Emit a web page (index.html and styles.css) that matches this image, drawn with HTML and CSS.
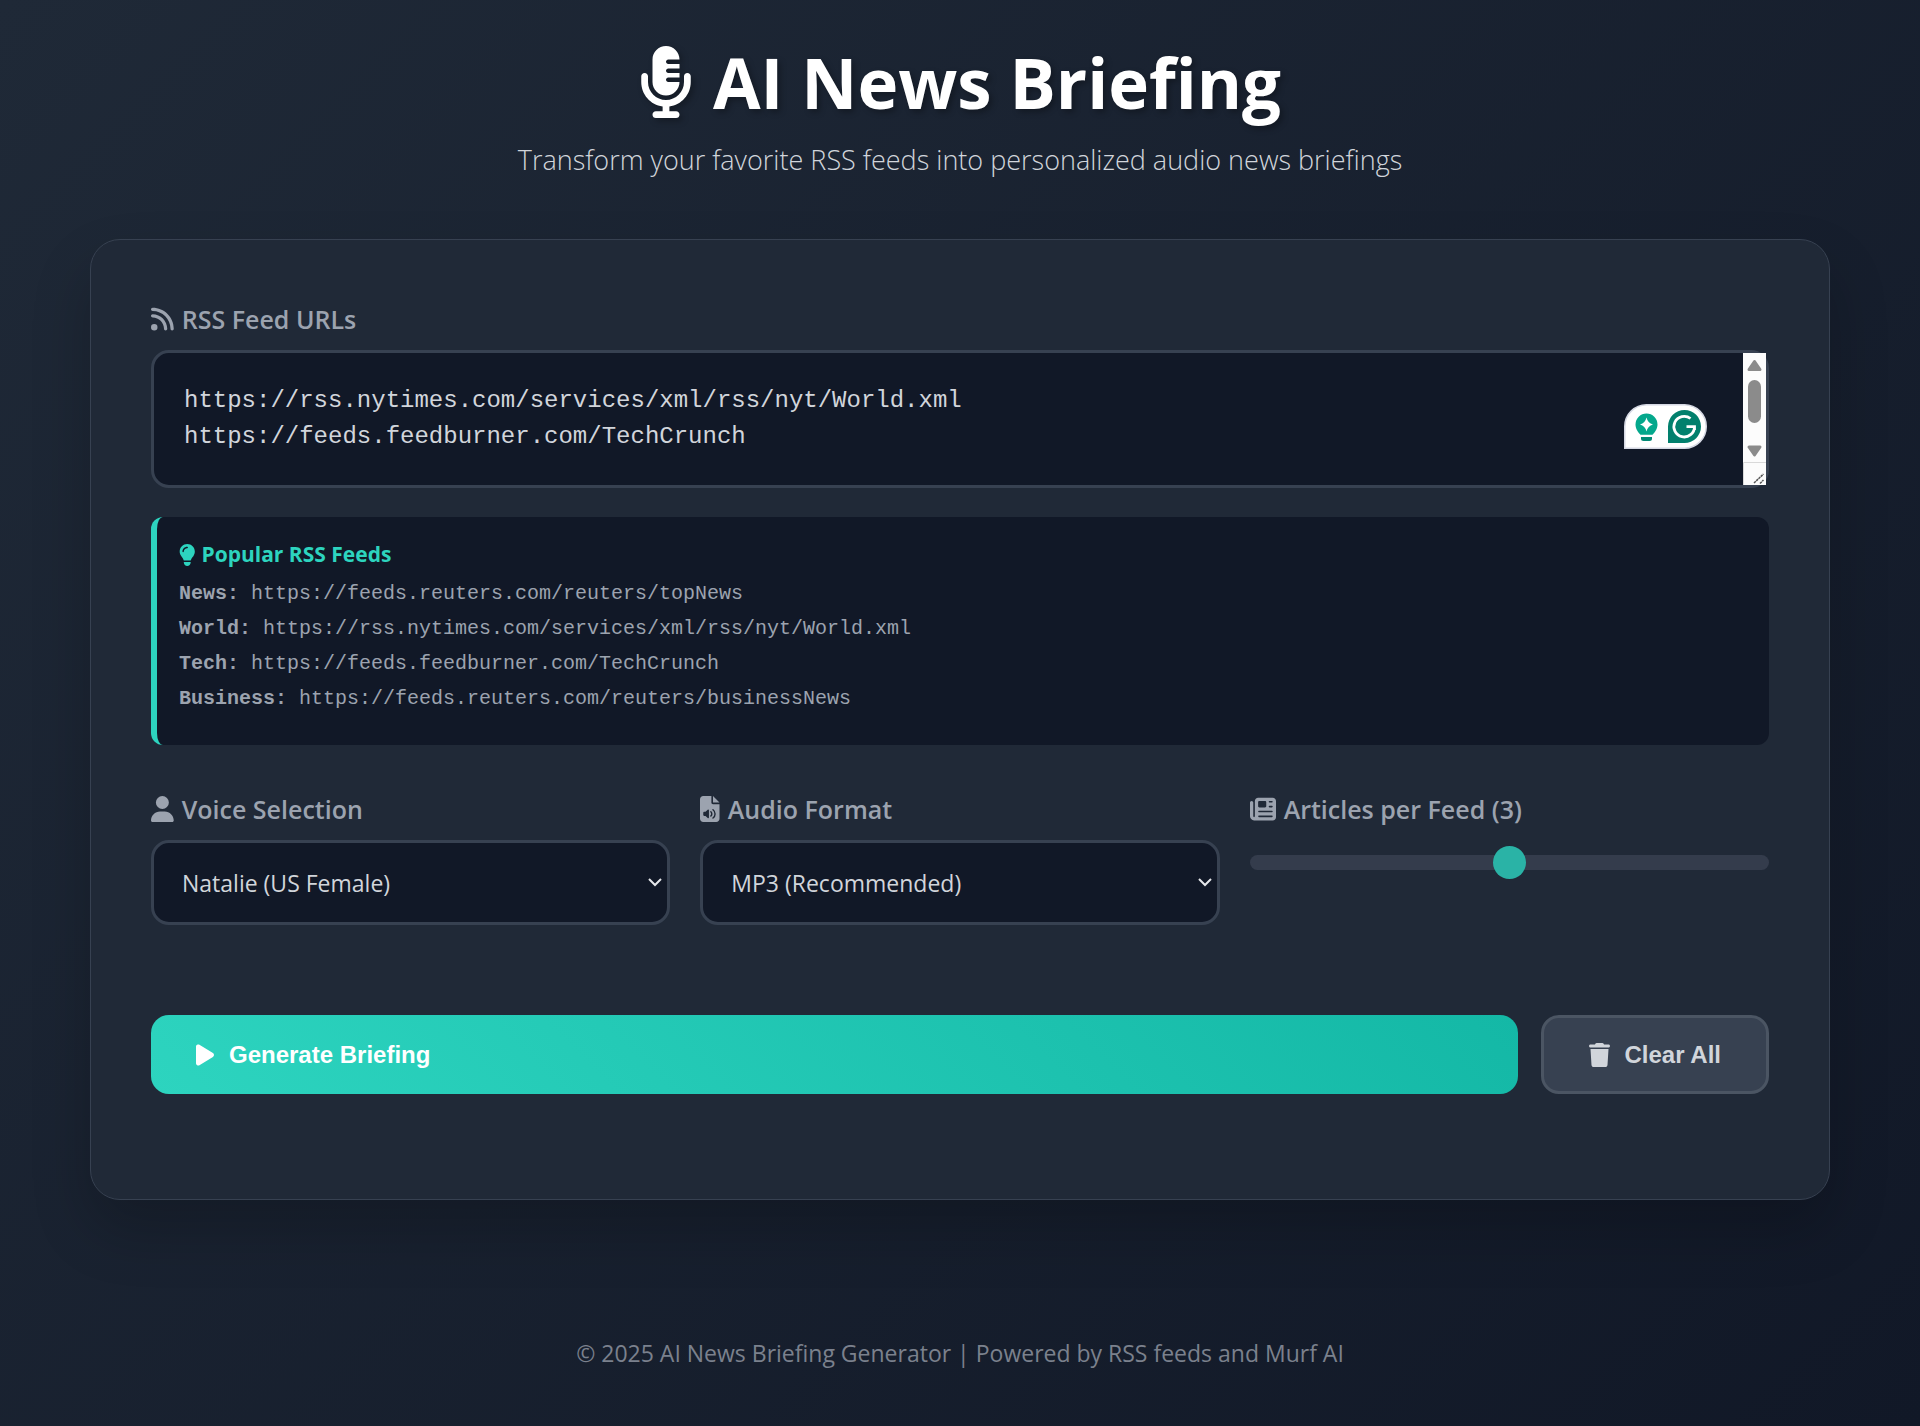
FILE: index.html
```html
<!DOCTYPE html>
<html lang="en">
<head>
<meta charset="utf-8">
<meta name="viewport" content="width=device-width, initial-scale=1">
<title>AI News Briefing</title>
<link rel="stylesheet" href="styles.css">
</head>
<body>
<div class="container">
  <header class="header">
    <h1 class="title">
      <svg class="title-icon" viewBox="0 0 384 512" aria-hidden="true"><path d="M96 96l0 160c0 53 43 96 96 96s96-43 96-96l-80 0c-8.8 0-16-7.2-16-16s7.2-16 16-16l80 0 0-32-80 0c-8.8 0-16-7.2-16-16s7.2-16 16-16l80 0 0-32-80 0c-8.8 0-16-7.2-16-16s7.2-16 16-16l80 0c0-53-43-96-96-96S96 43 96 96zM320 240l0 16c0 70.7-57.3 128-128 128s-128-57.3-128-128l0-40c0-13.3-10.7-24-24-24s-24 10.7-24 24l0 40c0 89.1 66.2 162.7 152 174.4l0 33.6-48 0c-13.3 0-24 10.7-24 24s10.7 24 24 24l144 0c13.3 0 24-10.7 24-24s-10.7-24-24-24l-48 0 0-33.6c85.8-11.7 152-85.3 152-174.4l0-40c0-13.3-10.7-24-24-24s-24 10.7-24 24l0 24z"/></svg>
      <span>AI News Briefing</span>
    </h1>
    <p class="subtitle">Transform your favorite RSS feeds into personalized audio news briefings</p>
  </header>

  <main class="card">
    <form class="form">
      <div class="field">
        <label class="label" for="feeds">
          <svg class="icon" viewBox="0 0 448 512" aria-hidden="true"><path d="M0 64C0 46.3 14.3 32 32 32c229.8 0 416 186.2 416 416c0 17.7-14.3 32-32 32s-32-14.3-32-32C384 253.6 226.4 96 32 96C14.3 96 0 81.7 0 64zM0 416a64 64 0 1 1 128 0A64 64 0 1 1 0 416zM32 160c159.1 0 288 128.9 288 288c0 17.7-14.3 32-32 32s-32-14.3-32-32c0-123.7-100.3-224-224-224c-17.7 0-32-14.3-32-32s14.3-32 32-32z"/></svg>
          RSS Feed URLs
        </label>
        <div class="feeds-box">
          <textarea class="feeds" id="feeds" rows="2" spellcheck="false">https://rss.nytimes.com/services/xml/rss/nyt/World.xml
https://feeds.feedburner.com/TechCrunch</textarea>
          <svg class="scrollbar" viewBox="0 0 23 132" aria-hidden="true">
            <rect width="23" height="132" fill="#fcfcfc"/>
            <path d="M11.5 8.5L17 16.5H6z" fill="#8b8b8b" stroke="#8b8b8b" stroke-width="3" stroke-linejoin="round"/>
            <rect x="5" y="27" width="13" height="43" rx="6.5" fill="#8b8b8b"/>
            <path d="M11.5 102L17 94H6z" fill="#8b8b8b" stroke="#8b8b8b" stroke-width="3" stroke-linejoin="round"/>
            <path d="M.5 132V109.5H23" fill="none" stroke="#d9d9d9"/>
            <path d="M11 130L20.5 121M17 130.5L20.5 127" fill="none" stroke="#555" stroke-width="1.5" stroke-dasharray="2.5 .6"/>
          </svg>
          <svg class="assistant" viewBox="0 0 83 45" aria-hidden="true">
            <path d="M.75 44.25V22.5A21.75 21.75 0 0 1 22.5 .75H60.5a21.75 21.75 0 0 1 0 43.5z" fill="#fff" stroke="#d5d8e3" stroke-width="1.5"/>
            <path d="M22.5 9.5a11 11 0 0 1 11 11c0 4.5-2.5 7.5-5 10.3H16.5c-2.5-2.8-5-5.8-5-10.3a11 11 0 0 1 11-11z" fill="#04a88c"/>
            <path d="M17 33h11v1.5a2.5 2.5 0 0 1-2.5 2.5h-6a2.5 2.5 0 0 1-2.5-2.5z" fill="#028a75"/>
            <path d="M22.5 13.5q1.3 5.7 6.5 7-5.2 1.3-6.5 7-1.3-5.7-6.5-7 5.2-1.3 6.5-7z" fill="#fff"/>
            <path d="M44 39V22.5A16.5 16.5 0 1 1 60.5 39z" fill="#02806d"/>
            <path d="M66.5 14.5A10.3 10.3 0 1 0 70.5 22.7H62.5M70.5 22.7V26" fill="none" stroke="#fff" stroke-width="2.8"/>
          </svg>
        </div>
      </div>

      <section class="popular">
        <h2 class="popular-title">
          <svg class="popular-icon" viewBox="0 0 384 512" aria-hidden="true"><path d="M272 384c9.6-31.9 29.5-59.1 49.2-86.2c5.2-7.1 10.4-14.2 15.4-21.4c19.8-28.5 31.4-63 31.4-100.3C368 78.8 289.2 0 192 0S16 78.8 16 176c0 37.3 11.6 71.9 31.4 100.3c5 7.2 10.2 14.3 15.4 21.4c19.8 27.1 39.7 54.4 49.2 86.2l160 0zM192 512c44.2 0 80-35.8 80-80l0-16-160 0 0 16c0 44.2 35.8 80 80 80zM112 176c0 8.8-7.2 16-16 16s-16-7.2-16-16c0-61.9 50.1-112 112-112c8.8 0 16 7.2 16 16s-7.2 16-16 16c-44.2 0-80 35.8-80 80z"/></svg>
          Popular RSS Feeds
        </h2>
        <ul class="popular-list">
          <li><strong>News:</strong> https://feeds.reuters.com/reuters/topNews</li>
          <li><strong>World:</strong> https://rss.nytimes.com/services/xml/rss/nyt/World.xml</li>
          <li><strong>Tech:</strong> https://feeds.feedburner.com/TechCrunch</li>
          <li><strong>Business:</strong> https://feeds.reuters.com/reuters/businessNews</li>
        </ul>
      </section>

      <div class="options">
        <div class="field">
          <label class="label" for="voice">
            <svg class="icon" viewBox="0 0 448 512" aria-hidden="true"><path d="M224 256A128 128 0 1 0 224 0a128 128 0 1 0 0 256zm-45.7 48C79.8 304 0 383.8 0 482.3C0 498.7 13.3 512 29.7 512l388.6 0c16.4 0 29.7-13.3 29.7-29.7C448 383.8 368.2 304 269.7 304l-91.4 0z"/></svg>
            Voice Selection
          </label>
          <div class="select-box">
            <select class="select" id="voice"><option>Natalie (US Female)</option></select>
            <svg class="chevron" viewBox="0 0 14 9" aria-hidden="true"><path d="M1 1l6 6 6-6"/></svg>
          </div>
        </div>
        <div class="field">
          <label class="label" for="format">
            <svg class="icon" viewBox="0 0 384 512" aria-hidden="true"><path d="M64 0C28.7 0 0 28.7 0 64L0 448c0 35.3 28.7 64 64 64l256 0c35.3 0 64-28.7 64-64l0-288-128 0c-17.7 0-32-14.3-32-32L224 0 64 0zM256 0l0 128 128 0L256 0z"/><path class="cutout" d="M80 312h28l44-40c10-9 24-4 24 10v140c0 14-14 19-24 10l-44-40H80c-9 0-16-7-16-16v-48c0-9 7-16 16-16z"/><path class="cutout-line" d="M214 312c24 22 24 58 0 80M256 272c54 44 54 116 0 160"/></svg>
            Audio Format
          </label>
          <div class="select-box">
            <select class="select" id="format"><option>MP3 (Recommended)</option></select>
            <svg class="chevron" viewBox="0 0 14 9" aria-hidden="true"><path d="M1 1l6 6 6-6"/></svg>
          </div>
        </div>
        <div class="field">
          <label class="label" for="articles">
            <svg class="icon" viewBox="0 0 512 512" aria-hidden="true"><path d="M96 96c0-35.3 28.7-64 64-64l288 0c35.3 0 64 28.7 64 64l0 320c0 35.3-28.7 64-64 64L80 480c-44.2 0-80-35.8-80-80L0 128c0-17.7 14.3-32 32-32s32 14.3 32 32l0 272c0 8.8 7.2 16 16 16s16-7.2 16-16L96 96zm64 24l0 80c0 13.3 10.7 24 24 24l112 0c13.3 0 24-10.7 24-24l0-80c0-13.3-10.7-24-24-24L184 96c-13.3 0-24 10.7-24 24zm208-8c0 8.8 7.2 16 16 16l48 0c8.8 0 16-7.2 16-16s-7.2-16-16-16l-48 0c-8.8 0-16 7.2-16 16zm0 96c0 8.8 7.2 16 16 16l48 0c8.8 0 16-7.2 16-16s-7.2-16-16-16l-48 0c-8.8 0-16 7.2-16 16zM160 304c0 8.8 7.2 16 16 16l256 0c8.8 0 16-7.2 16-16s-7.2-16-16-16l-256 0c-8.8 0-16 7.2-16 16zm0 96c0 8.8 7.2 16 16 16l256 0c8.8 0 16-7.2 16-16s-7.2-16-16-16l-256 0c-8.8 0-16 7.2-16 16z"/></svg>
            Articles per Feed (3)
          </label>
          <input class="range" id="articles" type="range" min="1" max="5" value="3">
        </div>
      </div>

      <div class="actions">
        <button class="button button-primary" type="button">
          <svg class="button-icon" viewBox="0 0 384 512" aria-hidden="true"><path d="M73 39c-14.8-9.1-33.4-9.4-48.5-.9S0 62.6 0 80L0 432c0 17.4 9.4 33.4 24.5 41.9s33.7 8.1 48.5-.9L361 297c14.3-8.7 23-24.2 23-41s-8.7-32.2-23-41L73 39z"/></svg>
          Generate Briefing
        </button>
        <button class="button button-secondary" type="button">
          <svg class="button-icon" viewBox="0 0 448 512" aria-hidden="true"><path d="M135.2 17.7L128 32 32 32C14.3 32 0 46.3 0 64S14.3 96 32 96l384 0c17.7 0 32-14.3 32-32s-14.3-32-32-32l-96 0-7.2-14.3C307.4 6.8 296.3 0 284.2 0L163.8 0c-12.1 0-23.2 6.8-28.6 17.7zM416 128L32 128 53.2 467c1.6 25.3 22.6 45 47.9 45l245.8 0c25.3 0 46.3-19.7 47.9-45L416 128z"/></svg>
          Clear All
        </button>
      </div>
    </form>
  </main>

  <footer class="footer">© 2025 AI News Briefing Generator | Powered by RSS feeds and Murf AI</footer>
</div>
</body>
</html>
```
FILE: styles.css
```css
* {
  box-sizing: border-box;
  margin: 0;
  padding: 0;
}

body {
  min-height: 100vh;
  background: linear-gradient(135deg, #1f2937 0%, #111827 100%);
  color: #d1d5db;
  font-family: "Open Sans", "Noto Sans", sans-serif;
}

svg {
  display: block;
  flex: none;
  fill: currentColor;
}

.container {
  padding: 30px 90px 55px;
}

.header {
  margin-bottom: 57px;
  text-align: center;
}

.title {
  display: flex;
  align-items: center;
  justify-content: center;
  gap: 20px;
  color: #fff;
  font-size: 69px;
  font-weight: 700;
  line-height: 104px;
  text-shadow: 3px 3px 6px rgba(0, 0, 0, 0.3);
}

.title-icon {
  height: 72px;
  filter: drop-shadow(3px 3px 3px rgba(0, 0, 0, 0.3));
}

.subtitle {
  margin-top: 4px;
  font-size: 27px;
  font-weight: 300;
  line-height: 44px;
}

.card {
  padding: 60px 60px 105px;
  border: 1px solid #374151;
  border-radius: 30px;
  background: #202937;
  box-shadow: 0 30px 60px rgba(0, 0, 0, 0.2);
}

.label {
  display: flex;
  align-items: center;
  gap: 8px;
  margin-bottom: 12px;
  color: #9ca3af;
  font-size: 25px;
  font-weight: 600;
  line-height: 38px;
}

.icon {
  height: 26px;
}

.cutout {
  fill: #202937;
}

.cutout-line {
  fill: none;
  stroke: #202937;
  stroke-width: 28px;
  stroke-linecap: round;
}

.feeds-box {
  position: relative;
}

.feeds {
  display: block;
  width: 100%;
  height: 138px;
  padding: 30px 60px 28px 30px;
  border: 3px solid #374151;
  border-radius: 18px;
  background: #111827;
  color: #d1d5db;
  font-family: "Liberation Mono", monospace;
  font-size: 24px;
  line-height: 36px;
  overflow: hidden;
  resize: none;
}

.scrollbar {
  position: absolute;
  top: 3px;
  right: 3px;
  width: 23px;
  height: 132px;
}

.assistant {
  position: absolute;
  top: 54px;
  right: 62px;
  width: 83px;
  height: 45px;
}

.popular {
  margin-top: 29px;
  padding: 22px 22px 29px;
  border-left: 6px solid #2dd4bf;
  border-radius: 12px;
  background: #111827;
}

.popular-title {
  display: flex;
  align-items: center;
  gap: 6px;
  margin-bottom: 6px;
  color: #2dd4bf;
  font-size: 21px;
  font-weight: 700;
  line-height: 31px;
}

.popular-icon {
  height: 22px;
}

.popular-list {
  color: #9ca3af;
  font-family: "Liberation Mono", monospace;
  font-size: 20px;
  line-height: 35px;
  list-style: none;
}

.options {
  display: grid;
  grid-template-columns: repeat(3, 1fr);
  gap: 30px;
  margin-top: 45px;
}

.select-box {
  position: relative;
}

.select {
  display: block;
  width: 100%;
  height: 85px;
  padding: 0 28px;
  border: 3px solid #374151;
  border-radius: 18px;
  background: #111827;
  color: #d1d5db;
  font-family: inherit;
  font-size: 23px;
  appearance: none;
}

.chevron {
  position: absolute;
  top: 38px;
  right: 8px;
  width: 14px;
  height: 9px;
  fill: none;
  stroke: #e5e7eb;
  stroke-width: 2px;
  pointer-events: none;
}

.range {
  display: block;
  width: 100%;
  height: 15px;
  margin-top: 27px;
  border-radius: 8px;
  background: #343c4c;
  appearance: none;
}

.range::-webkit-slider-thumb {
  width: 33px;
  height: 33px;
  border-radius: 50%;
  background: #2ab3a6;
  appearance: none;
}

.actions {
  display: flex;
  gap: 23px;
  margin-top: 90px;
}

.button {
  display: flex;
  align-items: center;
  gap: 15px;
  height: 79px;
  border: 0;
  border-radius: 18px;
  font-family: "Liberation Sans", sans-serif;
  font-size: 24px;
  font-weight: 700;
}

.button-primary {
  flex: 1;
  padding: 0 45px;
  background: linear-gradient(45deg, #2dd4bf, #14b8a6);
  color: #fff;
}

.button-secondary {
  padding: 0 45px;
  border: 3px solid #4b5563;
  background: #374151;
  color: #d1d5db;
}

.button-icon {
  height: 24px;
}

.footer {
  margin-top: 135px;
  color: #7b818d;
  font-size: 23px;
  line-height: 36px;
  text-align: center;
}
```
